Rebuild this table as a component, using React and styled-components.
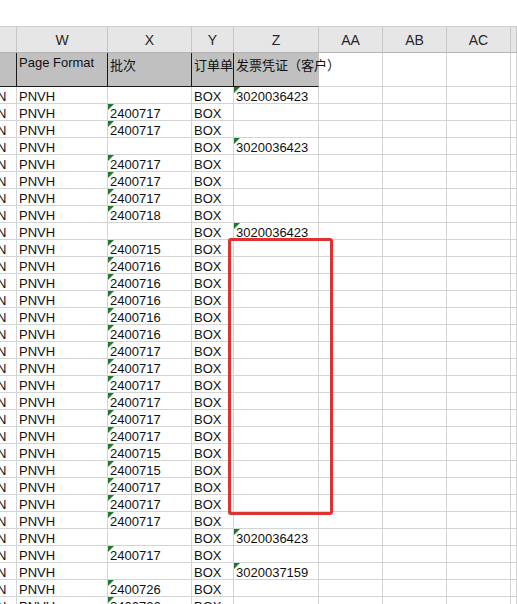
import React from "react";
import styled, { createGlobalStyle } from "styled-components";

const GlobalStyle = createGlobalStyle`
  html, body {
    margin: 0;
    padding: 0;
    background: #ffffff;
  }
  body {
    font-family: "Liberation Sans", Arial, "Noto Sans CJK SC", sans-serif;
    overflow: hidden;
  }
`;

const COLS = ["", "W", "X", "Y", "Z", "AA", "AB", "AC", ""];
const WIDTHS = "17px 91px 84px 42px 85px 64px 64px 64px 1fr";

// rows: [batch, invoice]
const rows = [
  ["", "3020036423"],
  ["2400717", ""],
  ["2400717", ""],
  ["", "3020036423"],
  ["2400717", ""],
  ["2400717", ""],
  ["2400717", ""],
  ["2400718", ""],
  ["", "3020036423"],
  ["2400715", ""],
  ["2400716", ""],
  ["2400716", ""],
  ["2400716", ""],
  ["2400716", ""],
  ["2400716", ""],
  ["2400717", ""],
  ["2400717", ""],
  ["2400717", ""],
  ["2400717", ""],
  ["2400717", ""],
  ["2400717", ""],
  ["2400715", ""],
  ["2400715", ""],
  ["2400717", ""],
  ["2400717", ""],
  ["2400717", ""],
  ["", "3020036423"],
  ["2400717", ""],
  ["", "3020037159"],
  ["2400726", ""],
  ["2400726", ""],
];

export default function App() {
  return (
    <Page>
      <GlobalStyle />
      <TopSpace />
      <Sheet>
        <LetterRow>
          {COLS.map((c, i) => (
            <Letter key={i}>{c}</Letter>
          ))}
        </LetterRow>

        <HeadRow>
          <HeadCell />
          <HeadCell>Page Format</HeadCell>
          <HeadCell>批次</HeadCell>
          <HeadCell>订单单</HeadCell>
          <HeadCell $overflow>发票凭证（客户）</HeadCell>
          <PlainHead />
          <PlainHead />
          <PlainHead />
          <PlainHead />
        </HeadRow>

        {rows.map(([batch, invoice], i) => (
          <Row key={i}>
            <Cell $cut>N</Cell>
            <Cell>PNVH</Cell>
            <Cell $flag={!!batch}>{batch}</Cell>
            <Cell>BOX</Cell>
            <Cell $flag={!!invoice}>{invoice}</Cell>
            <Cell />
            <Cell />
            <Cell />
            <Cell />
          </Row>
        ))}

        <Highlight />
      </Sheet>
    </Page>
  );
}

const Page = styled.div`
  width: 517px;
  height: 604px;
  overflow: hidden;
  background: #ffffff;
`;

const TopSpace = styled.div`
  height: 26px;
  background: #ffffff;
`;

const Sheet = styled.div`
  position: relative;
`;

const LetterRow = styled.div`
  display: grid;
  grid-template-columns: ${WIDTHS};
  height: 27px;
  background: #e6e6e6;
  border-top: 1px solid #d0d0d0;
  box-sizing: border-box;
`;

const Letter = styled.div`
  border-right: 1px solid #c6c6c6;
  border-bottom: 1px solid #b4b4b4;
  display: flex;
  align-items: center;
  justify-content: center;
  font-size: 14px;
  color: #262626;
  padding-top: 1px;
`;

const HeadRow = styled.div`
  display: grid;
  grid-template-columns: ${WIDTHS};
  height: 34px;
`;

const HeadCell = styled.div`
  background: #c0c0c0;
  border-right: 1px solid ${(p) => (p.$overflow ? "#c0c0c0" : "#1a1a1a")};
  border-bottom: 1px solid #1a1a1a;
  font-size: 13px;
  color: #111;
  padding: 2px 2px 0 2px;
  white-space: nowrap;
  overflow: ${(p) => (p.$overflow ? "visible" : "hidden")};
  position: relative;
  z-index: ${(p) => (p.$overflow ? 1 : 0)};
`;

const PlainHead = styled.div`
  border-right: 1px solid #d4d4d4;
  border-bottom: 1px solid #d4d4d4;
`;

const Row = styled.div`
  display: grid;
  grid-template-columns: ${WIDTHS};
  height: 17px;
`;

const Cell = styled.div`
  position: relative;
  border-right: 1px solid #d4d4d4;
  border-bottom: 1px solid #d4d4d4;
  font-size: 13px;
  line-height: 15px;
  color: #111;
  padding: 2px 2px 0 ${(p) => (p.$cut ? "0" : "2px")};
  text-indent: ${(p) => (p.$cut ? "-3px" : "0")};
  white-space: nowrap;
  overflow: hidden;

  &::before {
    content: "";
    display: ${(p) => (p.$flag ? "block" : "none")};
    position: absolute;
    left: 0;
    top: 0;
    width: 0;
    height: 0;
    border-top: 6px solid #1f7a2e;
    border-right: 6px solid transparent;
  }
`;

const Highlight = styled.div`
  position: absolute;
  left: 228px;
  top: 212px;
  width: 105px;
  height: 277px;
  box-sizing: border-box;
  border: 3px solid #e03131;
  border-radius: 3px;
  pointer-events: none;
`;
